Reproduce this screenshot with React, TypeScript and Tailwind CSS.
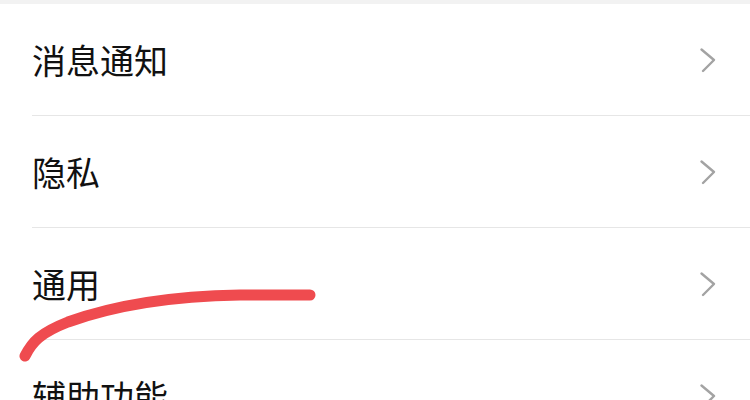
const items = ["消息通知", "隐私", "通用", "辅助功能"];

function Chevron() {
  return (
    <svg width="18" height="26" viewBox="0 0 18 26" fill="none" className="shrink-0">
      <polyline
        points="2.5,2.5 15,13 4,24"
        stroke="#a3a3a3"
        strokeWidth="2.4"
        strokeLinecap="round"
        strokeLinejoin="round"
      />
    </svg>
  );
}

export default function App() {
  return (
    <div
      className="relative w-[750px] h-[400px] overflow-hidden bg-white"
      style={{ fontFamily: '"Noto Sans CJK SC", "Noto Sans", sans-serif' }}
    >
      {/* top gap of the grouped list */}
      <div className="h-[4px] bg-[#f2f2f2]" />

      <div className="pl-[32px]">
        {items.map((label, i) => (
          <div
            key={label}
            className={
              i < items.length - 1
                ? "flex items-center justify-between h-[112px] pr-[33px] border-b border-[#e6e6e6]"
                : "flex items-center justify-between h-[112px] pr-[33px]"
            }
          >
            <span className="text-[34px] leading-none text-[#111111]">{label}</span>
            <Chevron />
          </div>
        ))}
      </div>

      {/* hand-drawn red mark over the list */}
      <svg
        className="absolute left-0 top-0 pointer-events-none"
        width="750"
        height="400"
        viewBox="0 0 750 400"
      >
        <path
          d="M25 356 C 32 342, 40 333, 68 322 C 118 304, 175 296, 240 295 L 310 295"
          stroke="#ef4b4f"
          strokeWidth="11"
          strokeLinecap="round"
          fill="none"
        />
      </svg>
    </div>
  );
}
